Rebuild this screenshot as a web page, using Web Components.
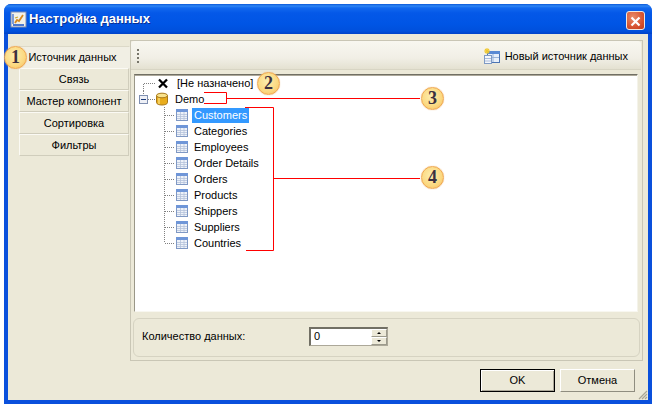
<!DOCTYPE html>
<html>
<head>
<meta charset="utf-8">
<title>Настройка данных</title>
<style>
  html, body { margin: 0; background: #fff; }
  body { font: 12px/16px "Liberation Sans", Arial, sans-serif; color: #000; width: 659px; height: 404px; overflow: hidden; }
</style>
</head>
<body>
<xp-window caption="Настройка данных">
  <side-tabs slot="tabs">
    <side-tab active>Источник данных</side-tab>
    <side-tab>Связь</side-tab>
    <side-tab>Мастер компонент</side-tab>
    <side-tab>Сортировка</side-tab>
    <side-tab>Фильтры</side-tab>
  </side-tabs>
  <data-panel slot="panel">
    <tool-bar slot="toolbar">Новый источник данных</tool-bar>
    <data-tree slot="tree">
      <tree-row kind="none">[Не назначено]</tree-row>
      <tree-row kind="db">Demo</tree-row>
      <tree-row kind="table" selected>Customers</tree-row>
      <tree-row kind="table">Categories</tree-row>
      <tree-row kind="table">Employees</tree-row>
      <tree-row kind="table">Order Details</tree-row>
      <tree-row kind="table">Orders</tree-row>
      <tree-row kind="table">Products</tree-row>
      <tree-row kind="table">Shippers</tree-row>
      <tree-row kind="table">Suppliers</tree-row>
      <tree-row kind="table" last>Countries</tree-row>
    </data-tree>
    <group-box slot="group">
      <span>Количество данных:</span>
      <spin-box value="0"></spin-box>
    </group-box>
  </data-panel>
  <xp-button slot="buttons" default>OK</xp-button>
  <xp-button slot="buttons">Отмена</xp-button>
</xp-window>
<call-outs></call-outs>

<script>
  class XpWindow extends HTMLElement {
    connectedCallback() {
      const root = this.attachShadow({ mode: 'open' });
      root.innerHTML = `
        <style>
          :host { display: block; width: 648px; height: 400px; margin: 4px 0 0 4px; }
          .frame { height: 100%; display: flex; flex-direction: column; background: #0a50dc; border-radius: 7px 7px 0 0; overflow: hidden; }
          .title {
            height: 30px; flex: none; display: flex; align-items: center; padding: 0 7px 0 6px; gap: 2px;
            background: linear-gradient(#0a58d8 0, #2f86f4 2px, #1268ee 4px, #0458e8 9px, #0055e5 20px, #0050dc 27px, #0042c8 30px);
          }
          .title svg { flex: none; margin-top: 1px; }
          .caption { flex: 1; font: bold 13px/16px "Liberation Sans", Arial, sans-serif; color: #fff; text-shadow: 1px 1px 0 #0a2f90; }
          .close { width: 19px; height: 19px; flex: none; box-sizing: border-box; border: 1px solid #f0e8e0; border-radius: 3px; background: radial-gradient(circle at 35% 30%, #e88a68, #d5502e 65%, #c03c1c); display: flex; align-items: center; justify-content: center; margin-top: 3px; }
          .client { flex: 1; min-height: 0; margin: 0 4px 4px 4px; background: #ece9d8; display: flex; flex-direction: column; position: relative; }
          .main { display: flex; padding: 6px 5px 0 11px; height: 321px; }
          .tabs { width: 111px; flex: none; padding-top: 6px; position: relative; z-index: 1; }
          .panel { width: 513px; flex: none; }
          .foot { display: flex; justify-content: flex-end; gap: 5px; padding: 8px 13px 0 0; }
          .grip { position: absolute; right: 0; bottom: 0; }
        </style>
        <div class="frame">
          <div class="title">
            <svg width="17" height="17" viewBox="0 0 17 17">
              <rect x="1" y="1" width="15" height="15" fill="#f2f0e8" stroke="#7c8cb4"/>
              <path d="M3 13h11v2H3z" fill="#4c78d0"/>
              <path d="M3 3v10" stroke="#4c78d0" stroke-width="1.4"/>
              <path d="M5 12l2-3 2 1 4-6" fill="none" stroke="#d88a20" stroke-width="1.8"/>
              <path d="M5 7l3-1" stroke="#c8a830" stroke-width="1.2"/>
            </svg>
            <div class="caption">${this.getAttribute('caption')}</div>
            <div class="close">
              <svg width="11" height="11" viewBox="0 0 11 11"><path d="M1.5 1.5l8 8M9.5 1.5l-8 8" stroke="#fff" stroke-width="2.2"/></svg>
            </div>
          </div>
          <div class="client">
            <div class="main">
              <div class="tabs"><slot name="tabs"></slot></div>
              <div class="panel"><slot name="panel"></slot></div>
            </div>
            <div class="foot"><slot name="buttons"></slot></div>
            <svg class="grip" width="10" height="10" viewBox="0 0 10 10"><path d="M9 1L1 9M9 4L4 9M9 7L7 9" stroke="#a8a594" stroke-width="1.2"/></svg>
          </div>
        </div>`;
    }
  }

  class SideTabs extends HTMLElement {
    connectedCallback() {
      this.attachShadow({ mode: 'open' }).innerHTML = `
        <style>:host { display: flex; flex-direction: column; }</style><slot></slot>`;
    }
  }

  class SideTab extends HTMLElement {
    connectedCallback() {
      this.attachShadow({ mode: 'open' }).innerHTML = `
        <style>
          :host { display: flex; align-items: center; justify-content: center; box-sizing: border-box; height: 22px; width: 110px; background: #ece9d8; border: 1px solid #d0cdbc; border-top-color: #fbfaf4; border-left-color: #fbfaf4; font-size: 11px; padding-bottom: 1px; }
          :host([active]) { width: 111px; background: #f1efe4; border-color: #dcd9c8 transparent transparent #dcd9c8; padding-right: 4px; }
        </style><slot></slot>`;
    }
  }

  class DataPanel extends HTMLElement {
    connectedCallback() {
      this.attachShadow({ mode: 'open' }).innerHTML = `
        <style>
          :host { display: flex; flex-direction: column; box-sizing: border-box; height: 321px; border: 1px solid #c9c6b5; padding: 0 3px 3px 2px; background: #ece9d8; }
          .tree { margin: 4px 0 0 1px; width: 504px; }
          .group { margin-top: 6px; }
        </style>
        <slot name="toolbar"></slot>
        <div class="tree"><slot name="tree"></slot></div>
        <div class="group"><slot name="group"></slot></div>`;
    }
  }

  class ToolBar extends HTMLElement {
    connectedCallback() {
      this.attachShadow({ mode: 'open' }).innerHTML = `
        <style>
          :host { display: flex; align-items: center; justify-content: space-between; box-sizing: border-box; height: 29px; margin: 0 -2px; padding: 1px 13px 0 6px; background: linear-gradient(#f8f7f0, #f1efe6 60%, #e4e1d1); border-bottom: 1px solid #d8d5c4; border-radius: 3px 3px 0 0; font-size: 11px; }
          .grip { width: 2px; height: 14px; background: repeating-linear-gradient(#77756a 0 2px, transparent 2px 4px); }
          .new { display: flex; align-items: center; gap: 5px; }
        </style>
        <div class="grip"></div>
        <div class="new">
          <svg width="16" height="16" viewBox="0 0 16 16">
            <rect x="3.5" y="3.5" width="12" height="11" fill="#e8f0fb" stroke="#4c74b4"/>
            <rect x="3" y="3" width="13" height="3" fill="#5a8ad4"/>
            <path d="M4 9.5h11M9 6v8" stroke="#9ab4da"/>
            <rect x="0.5" y="7.5" width="7" height="8" fill="#f4f7fc" stroke="#7f9ac4"/>
            <path d="M1 10.5h6M1 13h6" stroke="#aabcdc"/>
            <path d="M3 0v6M0 3h6M1 1l4 4M5 1L1 5" stroke="#f0c830" stroke-width="1.1"/>
          </svg>
          <slot></slot>
        </div>`;
    }
  }

  class DataTree extends HTMLElement {
    connectedCallback() {
      this.attachShadow({ mode: 'open' }).innerHTML = `
        <style>
          :host { display: block; box-sizing: border-box; height: 238px; background: #fff; border-top: 1px solid #716f64; border-left: 1px solid #9a9788; border-right: 1px solid #f4f3ea; border-bottom: 1px solid #f8f7f0; box-shadow: inset 0 1px 0 #aca899; }
        </style><slot></slot>`;
    }
  }

  const GUTTERS = {
    none: `<svg width="34" height="16" viewBox="0 0 34 16"><path d="M8.5 16V8.5H21" fill="none" stroke="#808080" stroke-dasharray="1 1"/><path d="M24 4.5l8 8M32 4.5l-8 8" stroke="#000" stroke-width="2.3"/></svg>`,
    db: `<svg width="34" height="16" viewBox="0 0 34 16">
        <path d="M8.5 0V3M13 8.5h8" stroke="#808080" stroke-dasharray="1 1"/>
        <rect x="4.5" y="4.5" width="8" height="8" fill="#eef0f6" stroke="#7f8fb0"/><path d="M6 8.5h5" stroke="#1c3c7c"/>
        <path d="M21.5 4.5v7c0 1.6 2.6 2.5 5.5 2.5s5.5-.9 5.5-2.5v-7z" fill="#e8ac1c" stroke="#a87818"/>
        <ellipse cx="27" cy="4.5" rx="5.5" ry="2.3" fill="#f8e28c" stroke="#a87818"/>
        <path d="M24 7v6" stroke="#f6d870" stroke-width="1.6"/></svg>`,
    table: `<svg width="53" height="16" viewBox="0 0 53 16">
        <path d="M29.5 0V16M30 8.5h10" stroke="#808080" stroke-dasharray="1 1"/>
        <rect x="41.5" y="2.5" width="11" height="11" fill="#eef2f9" stroke="#7f98c4"/>
        <rect x="41" y="2" width="12" height="3" fill="#6f96d8"/>
        <path d="M42 7.5h10M42 9.5h10M42 11.5h10M45.5 5v8M49 5v8" stroke="#b4c2da" stroke-width=".8"/></svg>`
  };

  class TreeRow extends HTMLElement {
    connectedCallback() {
      const kind = this.getAttribute('kind');
      let gutter = GUTTERS[kind];
      if (this.hasAttribute('last')) gutter = gutter.replace('M29.5 0V16', 'M29.5 0V8');
      this.attachShadow({ mode: 'open' }).innerHTML = `
        <style>
          :host { display: flex; align-items: center; height: 16px; font-size: 11px; }
          svg { flex: none; display: block; }
          .text { line-height: 15px; height: 15px; padding: 0 2px; white-space: nowrap; margin-left: ${kind === 'table' ? 4 : kind === 'none' ? 6 : 4}px; }
          :host([selected]) .text { background: #3399ff; color: #fff; }
        </style>
        ${gutter}<span class="text"><slot></slot></span>`;
    }
  }

  class GroupBox extends HTMLElement {
    connectedCallback() {
      this.attachShadow({ mode: 'open' }).innerHTML = `
        <style>
          :host { display: flex; align-items: center; box-sizing: border-box; height: 39px; width: 507px; border: 1px solid #d6d3c2; border-radius: 6px; padding: 0 0 3px 8px; font-size: 11px; }
          ::slotted(span) { width: 167px; }
        </style><slot></slot>`;
    }
  }

  class SpinBox extends HTMLElement {
    connectedCallback() {
      this.attachShadow({ mode: 'open' }).innerHTML = `
        <style>
          :host { display: flex; box-sizing: border-box; width: 79px; height: 19px; background: #fff; border: 1px solid #aca899; border-top-color: #716f64; border-left-color: #716f64; border-left-width: 2px; border-top-width: 2px; font-size: 11px; }
          .val { flex: 1; padding-left: 3px; line-height: 15px; }
          .arrows { width: 16px; display: flex; flex-direction: column; }
          .arrows div { flex: 1; background: #ece9d8; border: 1px solid #fff; border-right-color: #9c9a8c; border-bottom-color: #9c9a8c; display: flex; align-items: center; justify-content: center; box-sizing: border-box; }
          .up { width: 0; height: 0; border: 2px solid transparent; border-top: 0; border-bottom-color: #000; }
          .down { width: 0; height: 0; border: 2px solid transparent; border-bottom: 0; border-top-color: #000; }
        </style>
        <div class="val">${this.getAttribute('value')}</div>
        <div class="arrows"><div><i class="up"></i></div><div><i class="down"></i></div></div>`;
    }
  }

  class XpButton extends HTMLElement {
    connectedCallback() {
      this.attachShadow({ mode: 'open' }).innerHTML = `
        <style>
          :host { display: flex; align-items: center; justify-content: center; box-sizing: border-box; width: 75px; height: 23px; background: #ece9d8; border: 1px solid; border-color: #fff #8f8d80 #8f8d80 #fff; font-size: 11px; padding-bottom: 1px; }
          :host([default]) { border: 1px solid #000; box-shadow: inset 1px 1px 0 #fff, inset -1px -1px 0 #aca899; }
        </style><slot></slot>`;
    }
  }

  class CallOuts extends HTMLElement {
    connectedCallback() {
      const badge = (n, x, y) => `<div class="badge" style="left:${x - 11}px;top:${y - 11}px">${n}</div>`;
      this.attachShadow({ mode: 'open' }).innerHTML = `
        <style>
          :host { display: block; position: absolute; left: 0; top: 0; z-index: 2; width: 659px; height: 404px; pointer-events: none; }
          svg { position: absolute; left: 0; top: 0; }
          .badge { position: absolute; width: 23px; height: 23px; box-sizing: border-box; border-radius: 50%; border: 1px solid #f0a850; background: radial-gradient(circle at 45% 40%, #fdeeb0 0, #fbd880 60%, #f5b45a 100%); box-shadow: 0 0 1px #e8b070; font: bold 18px/21px "Liberation Serif", serif; color: #3c3040; text-align: center; }
        </style>
        <svg width="659" height="404" viewBox="0 0 659 404" fill="none" stroke="#f00">
          <path d="M204 92.5H226.5V103.5H204M226.5 98.5H420"/>
          <path d="M245 107.5H273.5V250.5H246M273.5 178.5H420"/>
        </svg>
        ${badge(1, 15, 57)}${badge(2, 268, 83)}${badge(3, 432, 98)}${badge(4, 432, 177)}`;
    }
  }

  customElements.define('xp-window', XpWindow);
  customElements.define('side-tabs', SideTabs);
  customElements.define('side-tab', SideTab);
  customElements.define('data-panel', DataPanel);
  customElements.define('tool-bar', ToolBar);
  customElements.define('data-tree', DataTree);
  customElements.define('tree-row', TreeRow);
  customElements.define('group-box', GroupBox);
  customElements.define('spin-box', SpinBox);
  customElements.define('xp-button', XpButton);
  customElements.define('call-outs', CallOuts);
</script>
</body>
</html>
